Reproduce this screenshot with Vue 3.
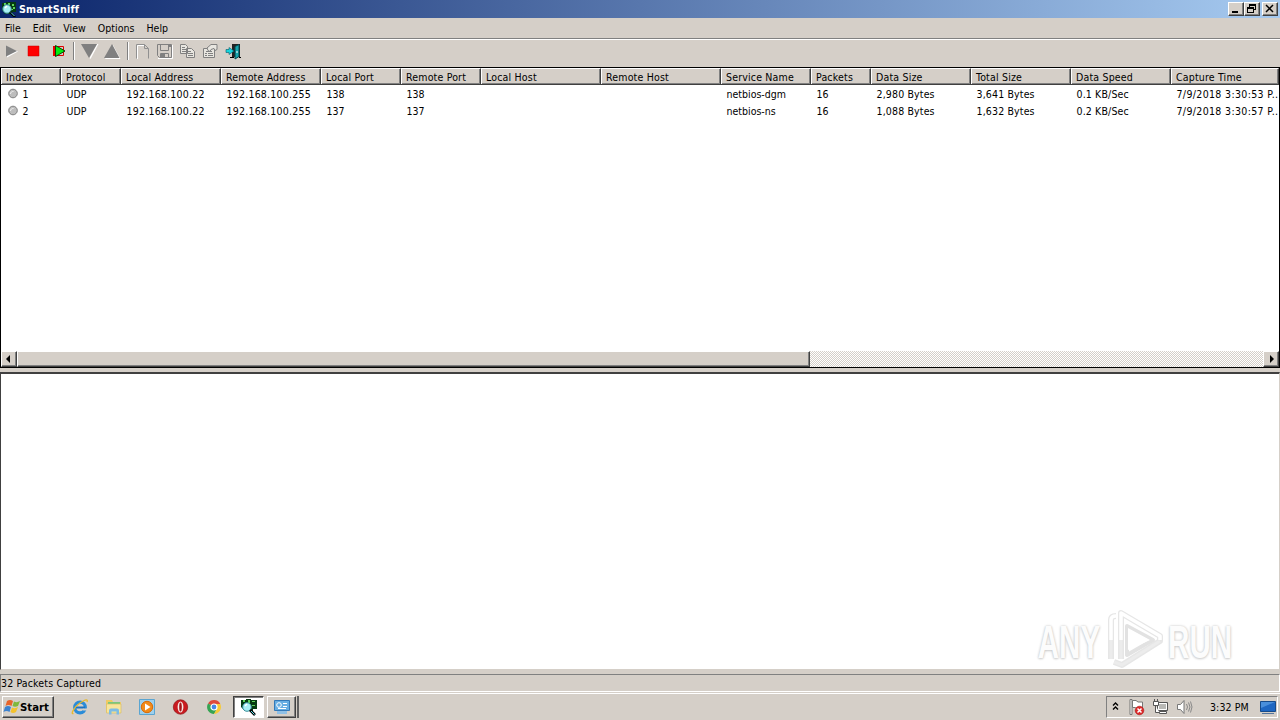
<template>
  <div class="desktop">
    <div class="title-bar">
      <svg class="app-icon" width="16" height="16" viewBox="0 0 16 16">
        <path d="M1 2h4V1h10v10h-4v2H4L1 9z" fill="#063b12" />
        <path d="M3 2h2v2H3zM7 2h2v2H7zM11 3h2v2h-2zM12 6h2v2h-2zM10 8h2v1h-2z" fill="#5fd35a" />
        <circle cx="6" cy="8" r="4.2" fill="#a9f0f4" stroke="#3a8f9c" />
        <path d="M4 7l2-2" stroke="#fff" stroke-width="1.4" />
        <path d="M9 11l5 5" stroke="#000" stroke-width="2.4" />
        <path d="M10 11.500l3.500 3.500" stroke="#5de4ef" />
      </svg>
      <span class="title">SmartSniff</span>
      <div class="win-buttons">
        <button class="win-btn"><svg width="14" height="12" viewBox="0 0 14 12"><path d="M3 8h6v2H3z" /></svg></button>
        <button class="win-btn">
          <svg width="14" height="12" viewBox="0 0 14 12" shape-rendering="crispEdges"><path d="M4 1h7v6H9V9H9v1H2V4h2zM5 3v1h4v2h1V3zM3 6v3h5V6z" fill-rule="evenodd" /></svg>
        </button>
        <button class="win-btn close"><svg width="14" height="12" viewBox="0 0 14 12"><path d="M3 2l7 7M10 2l-7 7" stroke="#000" stroke-width="1.500" /></svg></button>
      </div>
    </div>

    <div class="menu-bar">
      <span v-for="m in menus" :key="m" class="menu-item">{{ m }}</span>
    </div>

    <div class="toolbar">
      <svg class="tool play" width="16" height="16" viewBox="0 0 16 16"><path d="M3 3.500l11 5-11 6z" fill="#fff" /><path d="M2 2.500l11 5.500-11 5.500z" fill="#808080" /></svg>
      <svg class="tool stop" width="16" height="16" viewBox="0 0 16 16"><path d="M2 3h11v10H2z" fill="#f00" stroke="#c40000" stroke-width=".5" /></svg>
      <svg class="tool restart" width="16" height="16" viewBox="0 0 16 16"><path d="M2 3h4v10H2z" fill="#e00" /><path d="M2 3.500h10.500v9H2" stroke="#d00" fill="none" /><path d="M4.500 2.500v11L14 8z" fill="#0e1" stroke="#064006" /></svg>
      <i class="sep"></i>
      <svg class="tool down" width="18" height="18" viewBox="0 0 18 18"><path d="M16 2h1.500L9.500 17l-1-1z" fill="#fff" /><path d="M0 2h16L8 16z" fill="#808080" /></svg>
      <svg class="tool up" width="18" height="18" viewBox="0 0 18 18"><path d="M1 17h15.500L9 3z" fill="#fff" /><path d="M0 16h15.500L8 2z" fill="#808080" /></svg>
      <i class="sep second"></i>
      <svg class="tool new" width="16" height="16" viewBox="0 0 16 16" fill="none"><path d="M2.500 16V2.500h7M10.500 5.500h3" stroke="#fff" /><path d="M1.500 15.500V1.500h8l4 4v10M9.500 1.500v4h4" stroke="#909090" /></svg>
      <svg class="tool save" width="18" height="16" viewBox="0 0 18 16" fill="none"><path d="M2 15.500h14.500V2" stroke="#fff" /><path d="M1.500 1.500h14v13h-12l-2-2zM4.500 1.500v6h8v-6M4.500 14V10.500h8V14" stroke="#808080" /><path d="M5 11h4v3H5zM13 2h2v2h-2z" fill="#808080" /></svg>
      <svg class="tool copy" width="17" height="16" viewBox="0 0 17 16"><g fill="#e8e6e0" stroke="#808080"><path d="M1.500 1.500h5l2 2v7h-7zM7.500 5.500h5l3 3v6h-8z" /><path d="M3 4.500h3M3 6.500h4M3 8.500h4M9 8.500h3M9 10.500h5M9 12.500h5" /></g></svg>
      <svg class="tool props" width="17" height="16" viewBox="0 0 17 16"><path d="M1.500 5.500h11v9h-11z" fill="#e8e6e0" stroke="#808080" /><path d="M4 8.500h6M3 10.500h2M6 10.500h5M3 12.500h2M6 12.500h5" stroke="#808080" /><path d="M5 5l4-3.500h6v5l-2 1-1-2-3 1-1 2-2-1z" fill="#e8e6e0" stroke="#808080" /></svg>
      <svg class="tool exit" width="17" height="17" viewBox="0 0 17 17"><path d="M7 1h8v13H7z" fill="#222" /><path d="M10 3.500l4-2v12l-4 2.500z" fill="#16a5ad" stroke="#034b50" /><path d="M5 14.500h4M14 14.500h2" stroke="#000" /><path d="M1 6.500h3V4.500L9 8l-5 3.500V9.500H1z" fill="#17d4dc" stroke="#075b69" stroke-width=".6" /><path d="M12 8v2" stroke="#fff" /></svg>
    </div>

    <div class="list">
      <div class="header-row">
        <div v-for="c in columns" :key="c" class="head">{{ c }}</div>
      </div>
      <div class="rows">
        <div v-for="r in rows" :key="r[0]" class="row">
          <div v-for="(cell, i) in r" :key="i" class="cell" :class="cellClass(i)">
            <svg v-if="i === 0" class="dot" width="12" height="12" viewBox="0 0 12 12"><circle cx="6" cy="5.500" r="4.300" fill="#bdbdbd" stroke="#808080" /><path d="M3.500 6a2.500 2.500 0 0 1 3-2.500" stroke="#eee" fill="none" /></svg>{{ cell }}
          </div>
        </div>
      </div>
      <div class="scrollbar">
        <div class="scroll-btn"><svg width="12" height="12" viewBox="0 0 12 12"><path d="M7 2v8L3 6z" /></svg></div>
        <div class="thumb"></div>
        <div class="track"></div>
        <div class="scroll-btn"><svg width="12" height="12" viewBox="0 0 12 12"><path d="M5 2v8l4-4z" /></svg></div>
      </div>
    </div>

    <div class="details">
      <div class="watermark">
        <span class="wm-text">ANY</span>
        <svg class="wm-logo" width="60" height="64" viewBox="0 0 60 64" fill="none" stroke-linejoin="round">
          <path d="M6 51V12q0-4 5-4M16 51V5l39 23v5L17 57l-8-3" stroke="#e6e6e6" stroke-width="6" />
          <path d="M22 43V18l26 14-26 15z" stroke="#e2e2e2" stroke-width="4" />
          <path d="M6 32v19M16 32v19M55 33L17 57l-8-3" stroke="#ececec" stroke-width="3" />
          <path d="M6 32V12q0-4 5-4M16 32V5l39 23v4" stroke="#fff" stroke-width="3.500" />
          <path d="M23 42V20l22 12z" fill="#fff" />
        </svg>
        <span class="wm-text">RUN</span>
      </div>
    </div>

    <div class="status-bar">32 Packets Captured</div>

    <div class="taskbar">
      <button class="start">
        <svg width="18" height="16" viewBox="0 0 18 16"><path d="M4 2q3-2 6 0L8.500 7q-3-2-6 0z" fill="#e8642a" /><path d="M11 2.500q3 1.500 6-.5l-2 5q-3 1.500-5.500 0z" fill="#7fb83c" /><path d="M2 8q3-2 6 0l-1.500 5q-3-2-6 0z" fill="#3c82cf" /><path d="M9 8.500q3 1.500 6-.5l-2 5q-3 2-5.500 0z" fill="#f4c22d" /></svg>
        <span>Start</span>
      </button>
      <div class="quick">
        <svg width="18" height="18" viewBox="0 0 18 18" fill="none"><circle cx="9" cy="9.500" r="5.300" stroke="#2b8cd8" stroke-width="3.200" /><path d="M5 9.500h9" stroke="#1c73c2" stroke-width="2" /><path d="M12 11.500h4" stroke="#d5cfc8" stroke-width="2" /><path d="M2.500 15.500C-1 17 3 9 9 5s8-4 7-1" stroke="#e9b92c" stroke-width="1.300" /></svg>
        <svg width="18" height="18" viewBox="0 0 18 18"><path d="M1 2h6l1 2h8v10H1z" fill="#efcb62" /><path d="M3 4h12v3H3z" fill="#7bc87c" /><path d="M1.500 6h14.500v9H1.500z" fill="#f7e59b" stroke="#d9b95b" stroke-width=".6" /><path d="M4 16.500v-4q0-2 2-2h6q2 0 2 2v4h-2.500v-3h-5v3z" fill="#7dbce4" /></svg>
        <svg width="18" height="18" viewBox="0 0 18 18"><path d="M1.500 1.500h15v15h-15z" fill="#9fd0ec" stroke="#5ba5d1" /><circle cx="9" cy="9" r="5.700" fill="#f28a19" stroke="#d86b08" /><path d="M7 5.500v7l5.500-3.500z" fill="#fff" /></svg>
        <svg width="18" height="18" viewBox="0 0 18 18"><circle cx="8.500" cy="9" r="7.200" fill="#c91a1f" stroke="#8d1115" stroke-width=".7" /><ellipse cx="8.500" cy="9" rx="2.900" ry="5.600" fill="#f7e9e7" /><ellipse cx="8.500" cy="9" rx="1.300" ry="4.600" fill="#a51318" /></svg>
        <svg width="18" height="18" viewBox="0 0 18 18"><path d="M9 9L3 5.500A7 7 0 0 1 15.300 6H9z" fill="#df4a3b" /><path d="M9 9l-6-3.500A7 7 0 0 0 9 16l3-5z" fill="#36a453" /><path d="M9 6h6.300A7 7 0 0 1 9 16l3.200-5.500z" fill="#f7cb37" /><circle cx="9" cy="9" r="3" fill="#4688e8" stroke="#fff" stroke-width="1.200" /></svg>
      </div>
      <div class="task active">
        <svg width="18" height="18" viewBox="0 0 18 18"><path d="M1 2h5V1h5v1h6v9h-4v2H5L1 9z" fill="#063b12" /><path d="M3 2h2v2H3zM8 2h2v3H8zM12 3h3v1h-3zM12 7h3v1h-3z" fill="#5fd35a" /><circle cx="7" cy="9" r="4.300" fill="#a9f0f4" stroke="#3a8f9c" /><path d="M5 8l2-2" stroke="#fff" stroke-width="1.400" /><path d="M10 12l5 5" stroke="#000" stroke-width="2.600" /><path d="M11 13l3.500 3.500" stroke="#5de4ef" /></svg>
      </div>
      <div class="task">
        <svg width="18" height="18" viewBox="0 0 18 18"><path d="M1.500 2.500h15v10h-15z" fill="#67aee3" stroke="#3379b8" /><path d="M4 13h10v3H4z" fill="#8fc0e6" /><circle cx="6" cy="7" r="2.300" fill="none" stroke="#fff" /><path d="M10 5.500h4M10 8.500h4M5 10.500h8" stroke="#fff" /></svg>
      </div>
      <i class="task-edge"></i>
      <div class="tray">
        <svg class="chev" width="8" height="12" viewBox="0 0 8 12" fill="none" stroke="#000" stroke-width="1.400"><path d="M1 4.500L3.500 2 6 4.500M1 8.500L3.500 6 6 8.500" /></svg>
        <svg class="flag" width="18" height="18" viewBox="0 0 18 18"><path d="M2 1.500h2v15H2z" fill="#fff" stroke="#777" /><path d="M4.500 2.500h3.500l2 1.500h4.500v7h-5l-2-1.500h-3z" fill="#fff" stroke="#777" /><circle cx="11.500" cy="12.500" r="4.300" fill="#dd2929" stroke="#a91616" stroke-width=".6" /><path d="M9.500 10.500l4 4M13.500 10.500l-4 4" stroke="#fff" stroke-width="1.500" /></svg>
        <svg class="net" width="18" height="18" viewBox="0 0 18 18"><path d="M5.500 4.500h10v8h-10z" fill="#b8b8b5" stroke="#555" /><path d="M6.500 5.500h8v6h-8z" fill="none" stroke="#fff" /><path d="M7.500 13.500h7v2h-7z" fill="#fff" stroke="#555" /><path d="M1.500 3.500h5v4h-5zM2.500 1v3M5.500 1v3M3.500 7.500v7h4" fill="#fff" stroke="#555" /></svg>
        <svg class="sound" width="18" height="18" viewBox="0 0 18 18" fill="none"><path d="M1.500 6.500h3l3.500-4v13l-3.500-4h-3z" fill="#fff" stroke="#777" /><path d="M10.500 6q2 3 0 6M12.500 4.500q3 4.500 0 9M14.500 3.500q3 5.500 0 11" stroke="#888" /></svg>
        <span class="clock">3:32 PM</span>
        <svg class="show-desk" width="16" height="14" viewBox="0 0 16 14"><path d="M.5 1.500h15v10H.5z" fill="#1f67c2" stroke="#174b8a" /><path d="M1 2h14L1 8z" fill="#4a8fdb" /><path d="M2 13.500h12" stroke="#56769c" /></svg>
      </div>
    </div>
  </div>
</template>

<script setup>
const menus = ['File', 'Edit', 'View', 'Options', 'Help']

const columns = [
  'Index', 'Protocol', 'Local Address', 'Remote Address', 'Local Port', 'Remote Port', 'Local Host',
  'Remote Host', 'Service Name', 'Packets', 'Data Size', 'Total Size', 'Data Speed', 'Capture Time'
]

const rows = [
  ['1', 'UDP', '192.168.100.22', '192.168.100.255', '138', '138', '', '', 'netbios-dgm', '16', '2,980 Bytes', '3,641 Bytes', '0.1 KB/Sec', '7/9/2018 3:30:53 P..'],
  ['2', 'UDP', '192.168.100.22', '192.168.100.255', '137', '137', '', '', 'netbios-ns', '16', '1,088 Bytes', '1,632 Bytes', '0.2 KB/Sec', '7/9/2018 3:30:57 P..']
]

const cellClass = (i) => {
  if (i === 2 || i === 3) return 'address'
  if (i === 13) return 'time'
  return i >= 10 ? 'amount' : ''
}
</script>

<style>
body { margin: 0; overflow: hidden; }
</style>

<style scoped>
.desktop { width: 1280px; height: 720px; display: flex; flex-direction: column; background: #d5cfc8; color: #000; font-family: "DejaVu Sans Condensed", "DejaVu Sans", sans-serif; font-stretch: condensed; font-size: 10.5px; white-space: nowrap; overflow: hidden; }
.desktop * { box-sizing: border-box; }
svg { display: block; flex: none; }
button { font: inherit; padding: 0; border: 0; }

.title-bar { height: 18px; flex: none; display: flex; align-items: center; padding: 0 2px 0 1px; background: linear-gradient(90deg, #0a246a, #a6caf0); }
.title { margin-left: 2px; color: #fff; font-weight: bold; font-size: 10.7px; letter-spacing: .2px; }
.win-buttons { margin-left: auto; display: flex; }
.win-btn { width: 16px; height: 14px; background: #d5cfc8; border: 1px solid; border-color: #fff #404040 #404040 #fff; box-shadow: inset -1px -1px #808080; }
.close { margin-left: 2px; }

.menu-bar { height: 21px; flex: none; display: flex; align-items: center; gap: 12px; padding-left: 5px; border-bottom: 1px solid #808080; }
.menu-item { line-height: 18px; letter-spacing: .03px; }

.toolbar { height: 28px; flex: none; display: flex; align-items: center; padding: 0 0 5px 4px; border-top: 1px solid #fff; }
.stop { margin-left: 6px; }
.restart { margin-left: 9px; }
.sep { width: 2px; height: 18px; margin: 0 6px; border-left: 1px solid #808080; border-right: 1px solid #fff; flex: none; }
.up { margin-left: 5px; }
.second { margin-left: 5px; }
.save { margin-left: 5px; }
.copy { margin-left: 5px; }
.props { margin-left: 6px; }
.exit { margin-left: 6px; }

.list { height: 301px; flex: none; display: flex; flex-direction: column; border: 1px solid #000; background: #fff; overflow: hidden; }
.header-row, .row { display: grid; grid-template-columns: 60px 60px 100px 100px 80px 80px 120px 120px 90px 60px 100px 100px 100px 108px; flex: none; }
.header-row { height: 17px; }
.head { height: 17px; padding-left: 5px; line-height: 17px; letter-spacing: .18px; background: #d5cfc8; border: 1px solid; border-color: #fff #404040 #404040 #fff; border-left-width: 0; box-shadow: inset 1px 0 #fff, inset -1px -1px #808080; }
.rows { flex: 1; }
.row { height: 17px; }
.cell { display: flex; align-items: center; padding-left: 5.5px; padding-top: 1px; overflow: hidden; }
.address { letter-spacing: .22px; }
.amount { letter-spacing: .15px; }
.time { letter-spacing: .35px; }
.dot { margin-right: 4px; }

.scrollbar { height: 16px; flex: none; display: flex; }
.scroll-btn { width: 16px; height: 16px; padding: 1px; background: #d5cfc8; border: 1px solid; border-color: #fff #404040 #404040 #fff; box-shadow: inset -1px -1px #808080; flex: none; }
.thumb { width: 793px; background: #d5cfc8; border: 1px solid; border-color: #fff #404040 #404040 #fff; box-shadow: inset -1px -1px #808080; }
.track { flex: 1; background: conic-gradient(#fff 25%, #d5cfc8 0 50%, #fff 0 75%, #d5cfc8 0) 0 0 / 2px 2px; }

.details { height: 298px; flex: none; margin-top: 4px; display: flex; justify-content: flex-end; align-items: flex-end; padding: 0 47px 0 0; background: #fff; border: 1px solid; border-top: 2px solid #404040; border-color: #404040 #d5cfc8 #d5cfc8 #404040; }
.watermark { display: flex; align-items: center; height: 59px; }
.wm-text { color: #fcfcfc; font-family: "Liberation Sans", sans-serif; font-size: 47px; font-weight: bold; line-height: 64px; text-shadow: 0 0 3px #c4c4c4, 0 1px 3px #d4d4d4; transform: translateY(2px) scaleX(.63); transform-origin: right; }
.wm-logo { margin: 0 3px 0 5px; }
.wm-text:last-child { transform-origin: left; margin-right: -38px; }

.status-bar { height: 18px; flex: none; margin-top: 4px; line-height: 16px; letter-spacing: .15px; border: 1px solid; border-color: #808080 #fff #fff #808080; }

.taskbar { flex: 1; margin-top: 1px; display: flex; align-items: center; padding: 0 2px; border-top: 1px solid #fff; }
.start { width: 52px; height: 22px; display: flex; align-items: center; font-size: 11.3px; font-weight: bold; background: #d5cfc8; border: 1px solid; border-color: #fff #404040 #404040 #fff; box-shadow: inset -1px -1px #808080; flex: none; }
.start span { margin-left: -1px; }
.quick { display: flex; gap: 15.500px; margin-left: 17px; }
.task { width: 29px; height: 22px; display: flex; align-items: center; justify-content: center; margin-left: 3px; border: 1px solid; border-color: #fff #404040 #404040 #fff; box-shadow: inset -1px -1px #808080; }
.active { width: 31px; margin-left: 10px; background: #fff; border-color: #404040 #fff #fff #404040; box-shadow: inset 1px 1px #808080; }
.task-edge { width: 3px; height: 22px; border-right: 2px solid #606060; }
.tray { width: 172px; height: 22px; margin-left: auto; display: flex; align-items: center; padding-left: 5px; border: 1px solid; border-color: #808080 #fff #fff #808080; }
.flag { margin-left: 8px; }
.net { margin-left: 6px; }
.sound { margin-left: 6px; }
.clock { margin-left: 16px; letter-spacing: .1px; }
.show-desk { margin-left: auto; margin-right: 1px; }
</style>
